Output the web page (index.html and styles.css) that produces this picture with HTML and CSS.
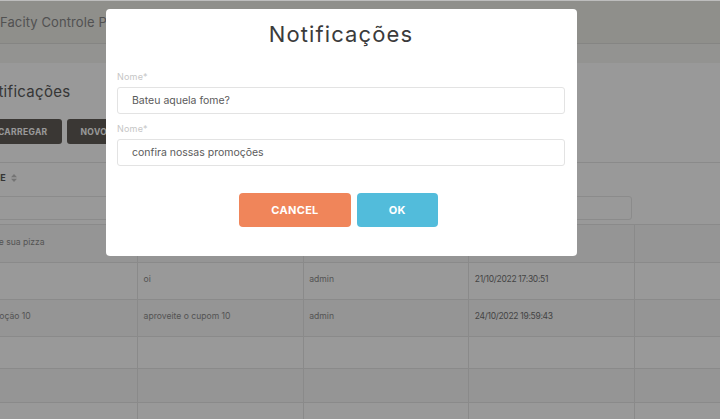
FILE: index.html
```html
<!DOCTYPE html>
<html lang="pt-BR">
<head>
<meta charset="utf-8">
<title>Notificações</title>
<link rel="stylesheet" href="styles.css">
</head>
<body>
<header class="topbar"><span class="brand">Facity Controle Painel</span></header>
<div class="subbar"></div>
<main class="page">
  <h1 class="page-title">Notificações</h1>
  <div class="actions">
    <button class="btn-dark" type="button">RECARREGAR</button>
    <button class="btn-dark" type="button">NOVO</button>
  </div>
  <div class="grid">
    <div class="grid-row grid-head">
      <div class="hcell"><span>NOME</span><svg class="sort" viewBox="0 0 6 8" width="6" height="8"><path d="M0 3.3 L3 0 L6 3.3 Z M0 4.7 L6 4.7 L3 8 Z"/></svg></div>
      <div class="hcell"><span>MENSAGEM</span></div>
      <div class="hcell"><span>USUÁRIO</span></div>
      <div class="hcell"><span>DATA</span></div>
      <div class="hcell"></div>
    </div>
    <div class="grid-row grid-filter">
      <div class="fcell"><input class="filter-input" type="text"></div>
      <div class="fcell"><input class="filter-input" type="text"></div>
      <div class="fcell"><input class="filter-input" type="text"></div>
      <div class="fcell"><input class="filter-input" type="text"></div>
      <div class="fcell"></div>
    </div>
    <div class="grid-body">
      <div class="grid-row body-row row-a striped">
        <div class="cell">Monte sua pizza</div>
        <div class="cell">Monte do seu jeito</div>
        <div class="cell">admin</div>
        <div class="cell date">20/10/2022 10:12:05</div>
        <div class="cell"></div>
      </div>
      <div class="grid-row body-row row-b">
        <div class="cell">oi</div>
        <div class="cell">oi</div>
        <div class="cell">admin</div>
        <div class="cell date">21/10/2022 17:30:51</div>
        <div class="cell"></div>
      </div>
      <div class="grid-row body-row row-b striped">
        <div class="cell">Promoção 10</div>
        <div class="cell">aproveite o cupom 10</div>
        <div class="cell">admin</div>
        <div class="cell date">24/10/2022 19:59:43</div>
        <div class="cell"></div>
      </div>
      <div class="grid-row body-row row-c">
        <div class="cell"></div><div class="cell"></div><div class="cell"></div><div class="cell"></div><div class="cell"></div>
      </div>
      <div class="grid-row body-row row-d striped">
        <div class="cell"></div><div class="cell"></div><div class="cell"></div><div class="cell"></div><div class="cell"></div>
      </div>
      <div class="grid-row body-row row-d">
        <div class="cell"></div><div class="cell"></div><div class="cell"></div><div class="cell"></div><div class="cell"></div>
      </div>
    </div>
  </div>
</main>
<div class="backdrop">
  <div class="modal" role="dialog">
    <h2 class="modal-title">Notificações</h2>
    <div class="field">
      <label class="field-label">Nome*</label>
      <input class="field-input" type="text" value="Bateu aquela fome?">
    </div>
    <div class="field">
      <label class="field-label">Nome*</label>
      <input class="field-input" type="text" value="confira nossas promoções">
    </div>
    <div class="modal-footer">
      <button class="btn btn-cancel" type="button">CANCEL</button>
      <button class="btn btn-ok" type="button">OK</button>
    </div>
  </div>
</div>
</body>
</html>
```
FILE: styles.css
```css
* { box-sizing: border-box; }
html, body { margin: 0; padding: 0; }
body {
  width: 720px;
  height: 419px;
  overflow: hidden;
  background: #ffffff;
  font-family: Inter, "DejaVu Sans", sans-serif;
}

.topbar {
  height: 44px;
  background: #eeeee8;
  border-bottom: 1px solid #dededa;
  display: flex;
  align-items: center;
}
.brand {
  font-size: 13px;
  color: #888888;
  letter-spacing: 0.1px;
}
.subbar {
  height: 19px;
  background: #f5f5f2;
}

.page {
  margin-left: -27.5px;
  width: 830px;
}
.page-title {
  margin: 17px 0 0 5px;
  font-size: 15px;
  line-height: 24px;
  font-weight: 400;
  color: #5a5a5a;
  letter-spacing: 0.3px;
}
.actions {
  display: flex;
  gap: 5px;
  margin-top: 15px;
}
.btn-dark {
  height: 25px;
  padding: 0 14px;
  border: none;
  border-radius: 3px;
  background: #625d57;
  color: #ffffff;
  font-family: Inter, "DejaVu Sans", sans-serif;
  font-size: 8.5px;
  font-weight: 700;
  letter-spacing: 0.35px;
}

.grid {
  margin-top: 18px;
  border-top: 1px solid #e6e6e6;
}
.grid-row {
  display: grid;
  grid-template-columns: repeat(5, 165.6px);
}
.grid-head { height: 33px; }
.hcell {
  display: flex;
  align-items: center;
  gap: 5px;
  padding: 0 5.5px 4px;
  font-size: 9px;
  font-weight: 700;
  color: #595959;
}
.sort { fill: #c2c2c2; }
.grid-filter { height: 28px; }
.fcell { padding: 0 3px; }
.filter-input {
  display: block;
  width: 100%;
  height: 24px;
  border: 1px solid #e8e8e8;
  border-radius: 3px;
  background: transparent;
}
.grid-body { border-top: 1px solid #e6e6e6; }
.body-row { border-bottom: 1px solid #e6e6e6; }
.row-a { height: 38px; }
.row-b { height: 37px; }
.row-c { height: 32px; }
.row-d { height: 34px; }
.striped { background: #f8f8f8; }
.cell {
  display: flex;
  align-items: center;
  padding: 0 5.5px 4px;
  border-right: 1px solid #e6e6e6;
  font-size: 8.6px;
  color: #8c8c8c;
  white-space: nowrap;
}
.cell.date {
  color: #727272;
  font-size: 8.5px;
  letter-spacing: -0.3px;
}

.backdrop {
  position: fixed;
  inset: 0;
  background: rgba(0, 0, 0, 0.4);
  border-top: 1px solid #bdbdbd;
}
.modal {
  width: 471px;
  margin: 8px 0 0 106px;
  padding: 12px 12px 29px 11px;
  background: #ffffff;
  border-radius: 4px;
}
.modal-title {
  margin: 0 0 24px;
  font-size: 22px;
  line-height: 26px;
  font-weight: 400;
  text-align: center;
  color: #3b3b3b;
  letter-spacing: 1.1px;
}
.field + .field { margin-top: 9px; }
.field-label {
  display: block;
  margin-bottom: 4px;
  font-size: 9px;
  line-height: 12px;
  color: #c6c6c6;
  letter-spacing: 0.2px;
}
.field-input {
  display: block;
  width: 100%;
  height: 27px;
  padding: 0 14px;
  border: 1px solid #e3e3e3;
  border-radius: 3px;
  font-family: Inter, "DejaVu Sans", sans-serif;
  font-size: 10.5px;
  color: #5a5a5a;
  background: #ffffff;
}
.modal-footer {
  display: flex;
  justify-content: center;
  gap: 6px;
  margin-top: 27px;
  padding-right: 5px;
}
.btn {
  height: 34px;
  padding: 0 32px;
  border: none;
  border-radius: 4px;
  color: #ffffff;
  font-family: Inter, "DejaVu Sans", sans-serif;
  font-size: 11px;
  font-weight: 700;
  letter-spacing: 0.3px;
}
.btn-cancel { background: #f0855a; }
.btn-ok { background: #52bcdb; }
```
